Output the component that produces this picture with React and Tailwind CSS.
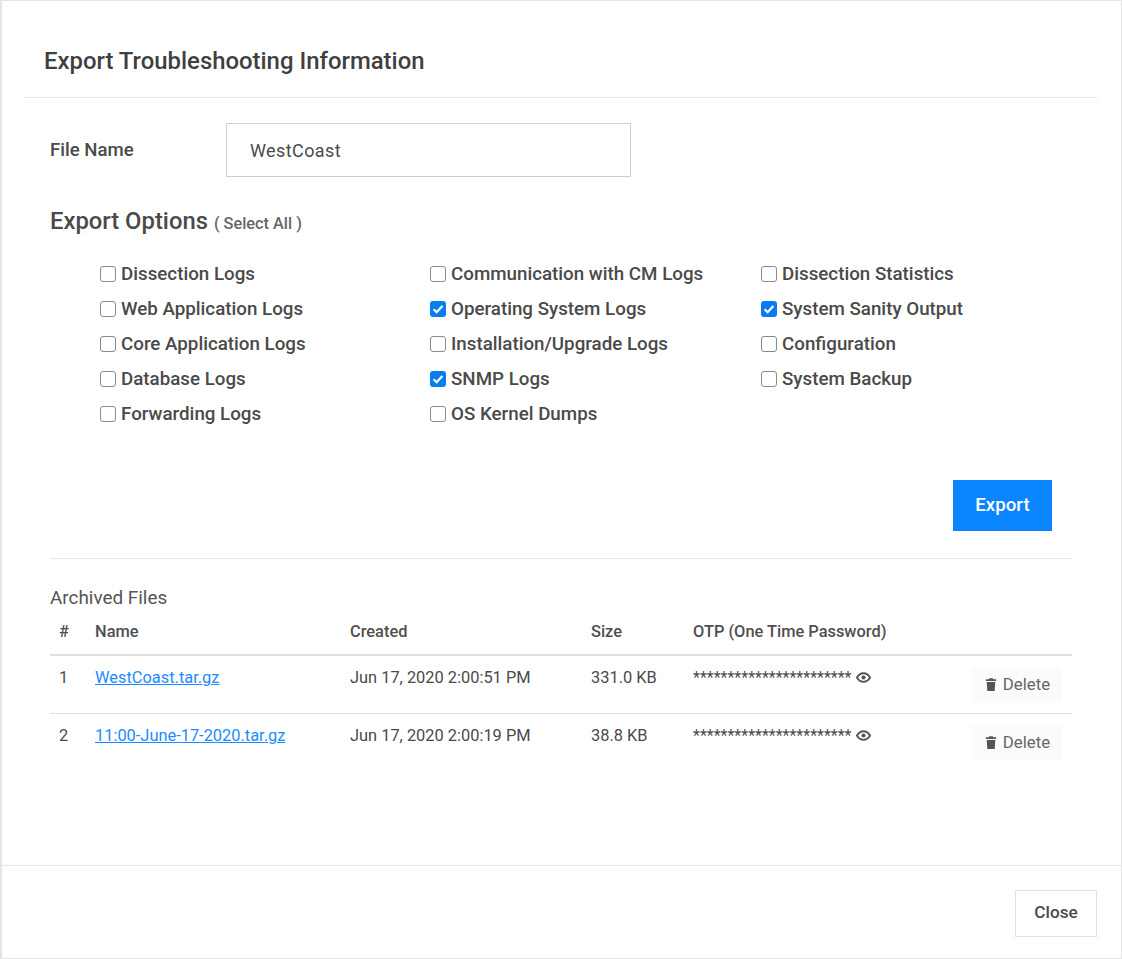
const optionColumns = [
    [
        { label: 'Dissection Logs' },
        { label: 'Web Application Logs' },
        { label: 'Core Application Logs' },
        { label: 'Database Logs' },
        { label: 'Forwarding Logs' },
    ],
    [
        { label: 'Communication with CM Logs' },
        { label: 'Operating System Logs', checked: true },
        { label: 'Installation/Upgrade Logs' },
        { label: 'SNMP Logs', checked: true },
        { label: 'OS Kernel Dumps' },
    ],
    [
        { label: 'Dissection Statistics' },
        { label: 'System Sanity Output', checked: true },
        { label: 'Configuration' },
        { label: 'System Backup' },
    ],
];

const archivedFiles = [
    { id: 1, name: 'WestCoast.tar.gz', created: 'Jun 17, 2020 2:00:51 PM', size: '331.0 KB' },
    { id: 2, name: '11:00-June-17-2020.tar.gz', created: 'Jun 17, 2020 2:00:19 PM', size: '38.8 KB' },
];

const Option = ({ label, checked }) => (
    <label className="flex h-[35px] items-center">
        {checked ? (
            <span className="flex h-[16px] w-[16px] items-center justify-center rounded-[3px] bg-[#0b7cf0]">
                <svg viewBox="0 0 16 16" className="h-[16px] w-[16px]">
                    <path d="M3.6 8.2 6.6 11.2 12.4 4.9" fill="none" stroke="#fff" strokeWidth="2.2" />
                </svg>
            </span>
        ) : (
            <span className="h-[16px] w-[16px] rounded-[3px] border border-[#8a8a8a] bg-white"></span>
        )}
        <span className="ml-[5px] text-[18.75px] font-medium text-[#4a4a4a]">{label}</span>
    </label>
);

const EyeIcon = () => (
    <svg viewBox="0 0 16 16" className="ml-[5px] h-[15px] w-[15px] shrink-0">
        <path d="M1 8s2.6-4.6 7-4.6 7 4.6 7 4.6-2.6 4.6-7 4.6S1 8 1 8z" fill="none" stroke="#555" strokeWidth="2" />
        <circle cx="8" cy="8" r="2.2" fill="#555" />
    </svg>
);

const TrashIcon = () => (
    <svg viewBox="0 0 14 16" className="mr-[6px] h-[14px] w-[12px] shrink-0" fill="#555">
        <path d="M5 0h4l.6 1.4H13V3.4H1V1.4h3.4z" />
        <path d="M2 4.6h10l-.7 10.4H2.7z" />
    </svg>
);

export default function App() {
    return (
        <div className="flex h-[959px] w-[1122px] flex-col border border-l-2 border-[#e4e4e4] bg-white font-['Roboto',sans-serif] text-[#4a4a4a]">
            <div className="mr-[24px] ml-[22px] flex h-[97px] shrink-0 items-center border-b border-[#e6e6e6] px-[20px]">
                <h1 className="pt-[26px] text-[23.9px] font-medium text-[#3f3f3f]">Export Troubleshooting Information</h1>
            </div>

            <div className="flex-1 pr-[49px] pl-[48px]">
                <div className="mt-[25px] flex items-center">
                    <span className="w-[176px] pt-[1px] text-[18.6px] font-medium">File Name</span>
                    <div className="flex h-[54px] w-[405px] items-center border border-[#cfcfcf] px-[23px] text-[18px] tracking-[0.4px]">WestCoast</div>
                </div>

                <div className="mt-[27px] flex items-baseline">
                    <h2 className="text-[23.8px] font-medium">Export Options</h2>
                    <span className="ml-[6px] text-[16.3px] font-medium text-[#666]">( Select All )</span>
                </div>

                <div className="mt-[17px] grid grid-cols-[330px_331px_1fr] pl-[50px]">
                    {optionColumns.map((column, i) => (
                        <div key={i}>
                            {column.map((option) => (
                                <Option key={option.label} {...option} />
                            ))}
                        </div>
                    ))}
                </div>

                <div className="mt-[48px] flex justify-end pr-[20px]">
                    <button className="h-[51px] w-[99px] bg-[#0a84ff] text-[18.7px] font-medium text-white">Export</button>
                </div>

                <div className="mt-[27px] border-t border-[#e6e6e6] pt-[25px]">
                    <div className="text-[18.9px] text-[#555]">Archived Files</div>
                    <table className="mt-[6px] w-full table-fixed text-left text-[16.4px]">
                        <thead>
                            <tr className="h-[37px] border-b-[2px] border-[#dddddd] text-[#4f4f4f]">
                                <th className="w-[45px] pb-[7px] pl-[9px] font-medium">#</th>
                                <th className="w-[255px] pb-[7px] font-medium">Name</th>
                                <th className="w-[241px] pb-[7px] font-medium">Created</th>
                                <th className="w-[102px] pb-[7px] font-medium">Size</th>
                                <th className="pb-[7px] font-medium">OTP (One Time Password)</th>
                            </tr>
                        </thead>
                        <tbody>
                            {archivedFiles.map((file) => (
                                <tr key={file.id} className="h-[58px] border-b border-[#e2e2e2] last:border-b-0">
                                    <td className="pb-[12px] pl-[9px]">{file.id}</td>
                                    <td className="pb-[12px]">
                                        <a className="text-[#1a8cff] underline">{file.name}</a>
                                    </td>
                                    <td className="pb-[12px]">{file.created}</td>
                                    <td className="pb-[12px]">{file.size}</td>
                                    <td>
                                        <div className="flex items-center justify-between pr-[10px]">
                                            <div className="mb-[13px] flex items-center">
                                                <span className="text-[16px] leading-[15px]">***********************</span>
                                                <EyeIcon />
                                            </div>
                                            <button className="mt-[1px] flex h-[35px] w-[91px] items-center justify-center bg-[#fbfbfb] pl-[2px] text-[16.8px] text-[#666]">
                                                <TrashIcon />
                                                Delete
                                            </button>
                                        </div>
                                    </td>
                                </tr>
                            ))}
                        </tbody>
                    </table>
                </div>
            </div>

            <div className="flex h-[93px] shrink-0 items-center justify-end border-t border-[#e6e6e6] pt-[2px] pr-[24px]">
                <button className="h-[47px] w-[82px] border border-[#e2e2e2] text-[17.2px] font-medium text-[#4a4a4a]">Close</button>
            </div>
        </div>
    );
}
